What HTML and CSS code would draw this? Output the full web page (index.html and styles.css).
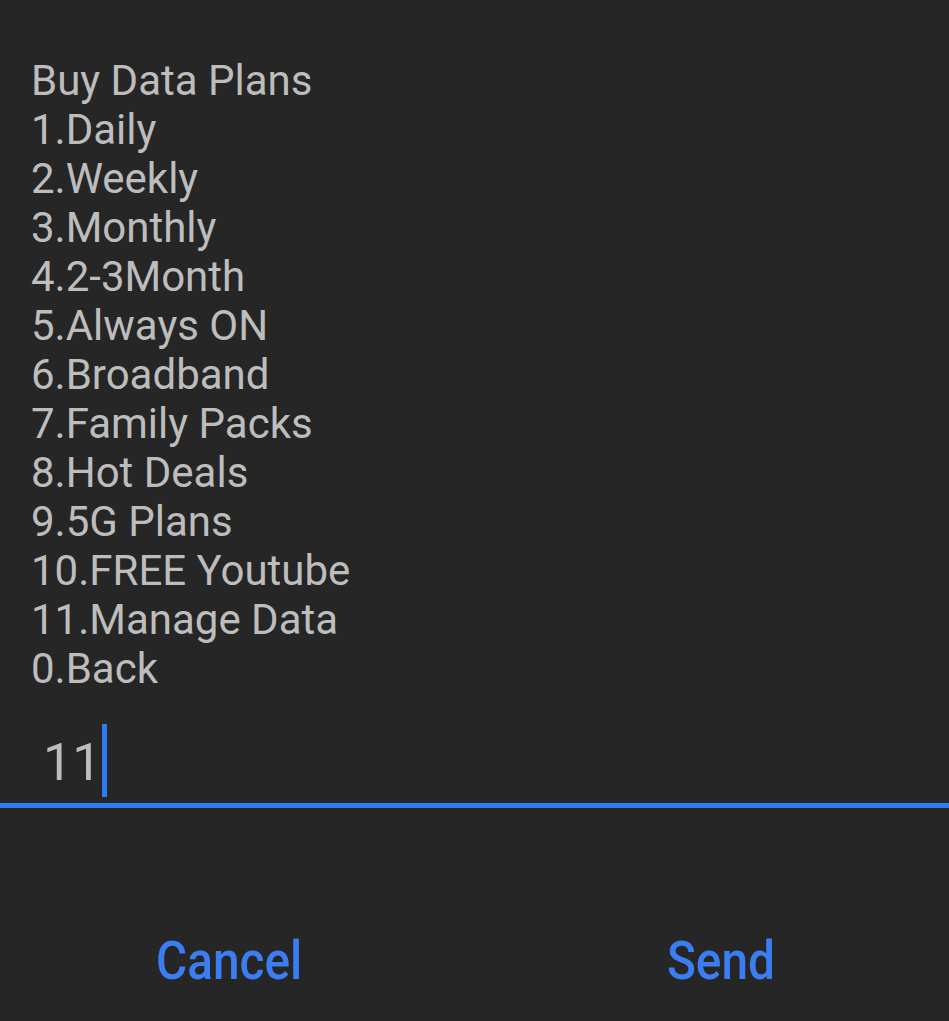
FILE: index.html
```html
<!DOCTYPE html>
<html>
<head>
<meta charset="utf-8">
<link rel="stylesheet" href="styles.css">
</head>
<body>
<div class="dialog">
  <div class="message">
    <div class="line">Buy Data Plans</div>
    <div class="line">1.Daily</div>
    <div class="line">2.Weekly</div>
    <div class="line">3.Monthly</div>
    <div class="line">4.2-3Month</div>
    <div class="line">5.Always ON</div>
    <div class="line">6.Broadband</div>
    <div class="line">7.Family Packs</div>
    <div class="line">8.Hot Deals</div>
    <div class="line">9.5G Plans</div>
    <div class="line">10.FREE Youtube</div>
    <div class="line">11.Manage Data</div>
    <div class="line">0.Back</div>
  </div>
  <div class="input-field">
    <span class="input-text">11</span><span class="caret"></span>
  </div>
  <div class="actions">
    <div class="btn btn-cancel"><span class="btn-label">Cancel</span></div>
    <div class="btn btn-send"><span class="btn-label">Send</span></div>
  </div>
</div>
</body>
</html>
```
FILE: styles.css
```css
html, body {
  margin: 0;
  padding: 0;
  background: #262626;
  height: 100%;
}
.dialog {
  font-family: Roboto, "Noto Sans", sans-serif;
  color: #bdbdbd;
  padding-top: 56px;
}
.message {
  padding-left: 31px;
  font-size: 42px;
  line-height: 49px;
}
.input-field {
  display: flex;
  align-items: flex-end;
  height: 104px;
  padding-left: 43px;
  padding-bottom: 6px;
  border-bottom: 5px solid #2f7bf3;
}
.input-text {
  font-size: 52px;
  line-height: 40px;
  padding-bottom: 14px;
  color: #bdbdbd;
}
.caret {
  display: inline-block;
  width: 5px;
  height: 73px;
  background: #2f7bf3;
  margin-left: 1px;
}
.actions {
  display: flex;
  padding-top: 123px;
}
.btn {
  width: 200px;
  text-align: center;
  font-size: 53px;
  font-weight: 500;
  color: #3a7ef2;
  line-height: 60px;
}
.btn-label {
  display: inline-block;
  transform: scaleX(0.9);
}
.btn-cancel {
  margin-left: 129px;
}
.btn-send {
  margin-left: auto;
  margin-right: 128px;
}
```
